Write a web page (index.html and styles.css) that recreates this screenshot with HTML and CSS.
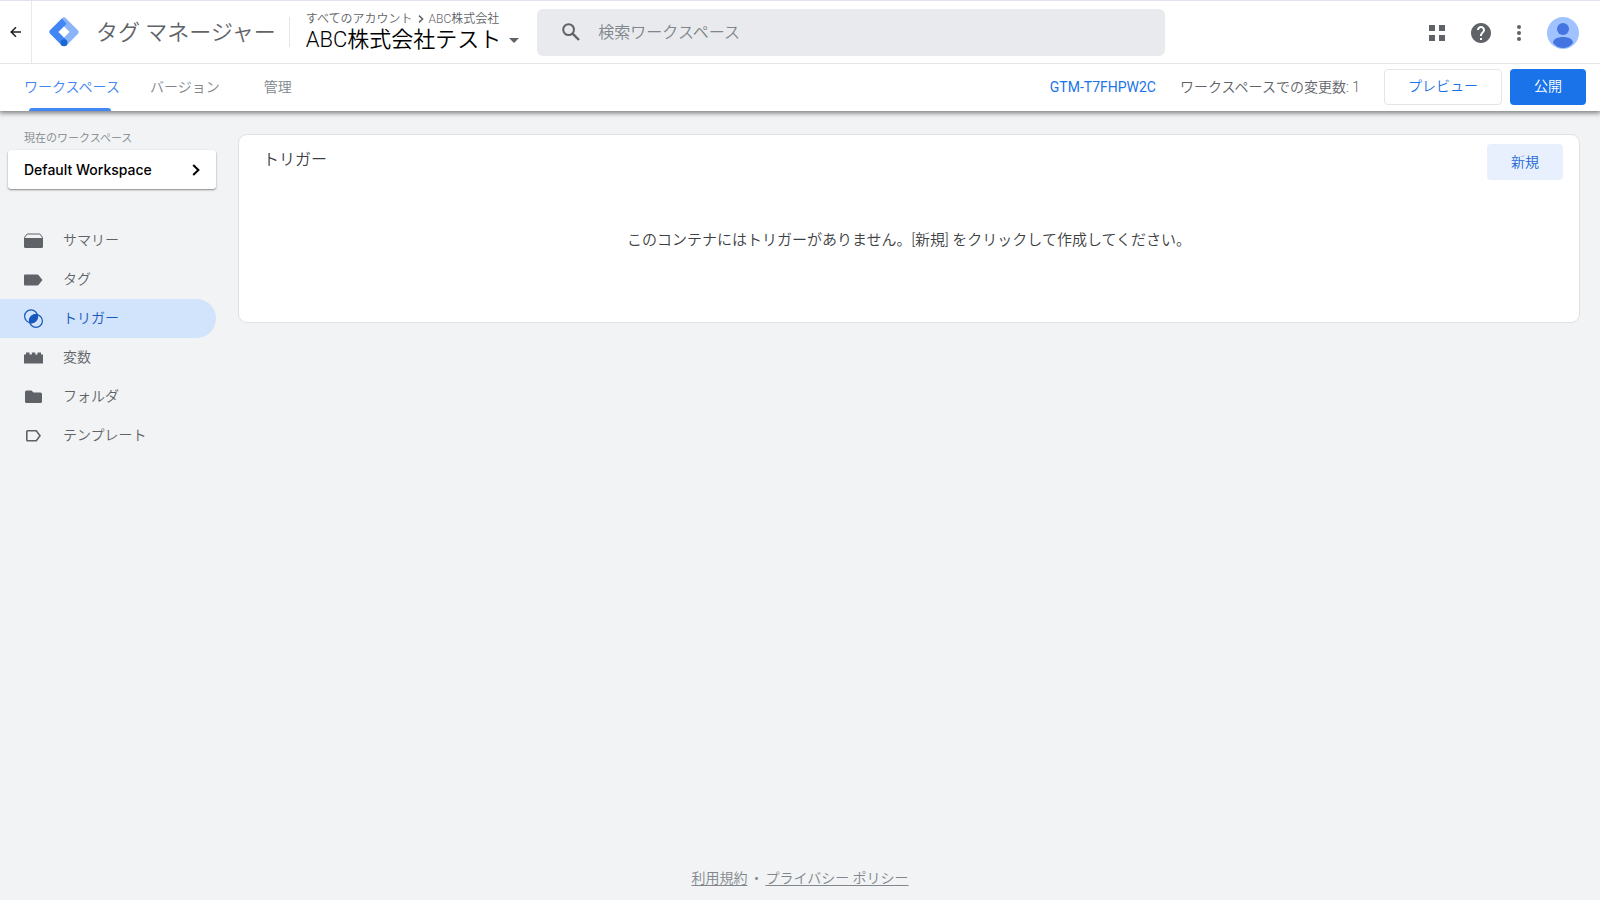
FILE: index.html
```html
<!DOCTYPE html>
<html lang="ja">
<head>
<meta charset="utf-8">
<meta name="viewport" content="width=device-width, initial-scale=1">
<title>タグ マネージャー</title>
<link rel="stylesheet" href="styles.css">
</head>
<body>
<header class="header">
  <div class="topbar">
    <button class="back" type="button" aria-label="戻る">
      <svg width="12" height="12" viewBox="0 0 12 12" fill="none" stroke="currentColor" stroke-width="1.5"><path d="M11 6H1.5M6 1.2L1.2 6 6 10.8"/></svg>
    </button>
    <a class="brand" href="#">
      <svg width="30" height="30" viewBox="0 0 30 30">
        <path d="M12.8 1.400a3 3 0 0 1 4.300 0l11.500 11.500a3 3 0 0 1 0 4.300L17.400 28.400l-5-5.200L20.600 15l-8-8z" fill="#8ab4f8"/>
        <path d="M12.800 1.400L1.400 12.800a3 3 0 0 0 0 4.300l11.400 11.500 4.800-5.400L9.400 15l8.200-8.200z" fill="#4285f4"/>
        <circle cx="15" cy="25.800" r="3.500" fill="#1967d2"/>
      </svg>
      <span class="brand-name">タグ マネージャー</span>
    </a>
    <div class="account">
      <div class="crumbs"><a href="#">すべてのアカウント</a><svg width="6" height="8" viewBox="0 0 6 8" fill="none" stroke="currentColor" stroke-width="1.5"><path d="M1 .6L4.6 4 1 7.4"/></svg><a href="#">ABC株式会社</a></div>
      <button class="container-name" type="button">ABC株式会社テスト<svg width="10" height="5" viewBox="0 0 10 5"><path d="M0 0h10L5 5z" fill="#5f6368"/></svg></button>
    </div>
    <label class="search">
      <svg width="18" height="18" viewBox="0 0 18 18" fill="none" stroke="#5f6368" stroke-width="2"><circle cx="6.6" cy="6.6" r="5.4"/><path d="M10.6 10.6l6.4 6.4" stroke-width="2.4"/></svg>
      <input type="search" placeholder="検索ワークスペース" aria-label="検索ワークスペース">
    </label>
    <div class="tools">
      <button type="button" aria-label="アプリ"><svg width="16" height="16" viewBox="0 0 16 16" fill="currentColor"><path d="M0 0h6v6H0zM10 0h6v6h-6zM0 10h6v6H0zM10 10h6v6h-6z"/></svg></button>
      <button type="button" aria-label="ヘルプ"><svg width="20" height="20" viewBox="2 2 20 20" fill="currentColor"><path d="M12 2C6.48 2 2 6.48 2 12s4.48 10 10 10 10-4.48 10-10S17.52 2 12 2zm1 17h-2v-2h2v2zm2.07-7.75l-.9.92C13.45 12.9 13 13.5 13 15h-2v-.5c0-1.1.45-2.1 1.17-2.83l1.24-1.26c.37-.36.59-.86.59-1.41 0-1.1-.9-2-2-2s-2 .9-2 2H8c0-2.21 1.79-4 4-4s4 1.79 4 4c0 .88-.36 1.68-.93 2.25z"/></svg></button>
      <button type="button" aria-label="メニュー"><svg width="4" height="16" viewBox="0 0 4 16" fill="currentColor"><circle cx="2" cy="2" r="2"/><circle cx="2" cy="8" r="2"/><circle cx="2" cy="14" r="2"/></svg></button>
      <button type="button" aria-label="アカウント"><svg width="32" height="32" viewBox="0 0 32 32"><circle cx="16" cy="16" r="16" fill="#a0c3ff"/><circle cx="16" cy="12" r="6" fill="#4374e0"/><path d="M6 26c0-4 4.500-6 10-6s10 2 10 6c-2.500 3-6 5-10 5s-7.500-2-10-5z" fill="#4374e0"/></svg></button>
    </div>
  </div>
  <div class="tabbar">
    <nav class="tabs">
      <a class="tab tab-active" href="#">ワークスペース</a>
      <a class="tab" href="#">バージョン</a>
      <a class="tab" href="#">管理</a>
    </nav>
    <div class="actions">
      <a class="gtm-id" href="#">GTM-T7FHPW2C</a>
      <span class="changes">ワークスペースでの変更数: 1</span>
      <div class="buttons">
        <button class="btn btn-outline" type="button">プレビュー</button>
        <button class="btn btn-primary" type="button">公開</button>
      </div>
    </div>
  </div>
</header>
<div class="body">
  <aside class="sidebar">
    <div class="ws-label">現在のワークスペース</div>
    <button class="ws" type="button">Default Workspace<svg width="8" height="12" viewBox="0 0 8 12" fill="none" stroke="currentColor" stroke-width="2"><path d="M1.200 1L6.400 6l-5.200 5"/></svg></button>
    <nav class="nav">
      <a href="#"><svg width="19" height="19" viewBox="0 0 19 19"><path d="M.7 8V6.200L3.200 3h12.600l2.500 3.200V8" fill="none" stroke="currentColor"/><path d="M0 7h19v8.500a1.500 1.500 0 0 1-1.500 1.500h-16A1.500 1.500 0 0 1 0 15.500z" fill="currentColor"/></svg><span>サマリー</span></a>
      <a href="#"><svg width="19" height="19" viewBox="0 0 19 19"><path d="M1 4.500h13L18.500 10 14 15.500H1a1 1 0 0 1-1-1v-9a1 1 0 0 1 1-1z" fill="currentColor"/></svg><span>タグ</span></a>
      <a class="nav-active" href="#"><svg width="19" height="19" viewBox="0 0 19 19"><g fill="none" stroke="currentColor" stroke-width="1.200"><circle cx="7" cy="7.300" r="6.400"/><circle cx="12" cy="12" r="6.400"/></g><path d="M13.300 5.700A6.400 6.400 0 0 0 5.700 13.600 6.400 6.400 0 0 0 13.300 5.700z" fill="currentColor" stroke="currentColor" stroke-width="1.200"/></svg><span>トリガー</span></a>
      <a href="#"><svg width="19" height="19" viewBox="0 0 19 19"><path d="M0 6.500h2V4.500h3.500v2H7.800V4.500h3.500v2h2.200V4.500H17v2h2v9H0z" fill="currentColor"/></svg><span>変数</span></a>
      <a href="#"><svg width="19" height="19" viewBox="0 0 19 19"><path d="M2.500 3.500h5l2 2h7A1.500 1.500 0 0 1 18 7v7.500a1.500 1.500 0 0 1-1.500 1.500h-14A1.500 1.500 0 0 1 1 14.500V5a1.500 1.500 0 0 1 1.500-1.500z" fill="currentColor"/></svg><span>フォルダ</span></a>
      <a href="#"><svg width="19" height="19" viewBox="0 0 19 19"><path d="M3.500 4.800h8.800L16 9.800l-3.700 5H3.500a.7.700 0 0 1-.7-.7v-8.600a.7.700 0 0 1 .7-.7z" fill="none" stroke="currentColor" stroke-width="1.600"/></svg><span>テンプレート</span></a>
    </nav>
  </aside>
  <main class="main">
    <section class="card">
      <div class="card-head">
        <h1>トリガー</h1>
        <button class="btn btn-tonal" type="button">新規</button>
      </div>
      <p class="empty">このコンテナにはトリガーがありません。[新規] をクリックして作成してください。</p>
    </section>
  </main>
</div>
<footer class="footer"><a href="#">利用規約</a><span>・</span><a href="#">プライバシー ポリシー</a></footer>
</body>
</html>
```

FILE: styles.css
```css
* { box-sizing: border-box; }

body {
  margin: 0;
  min-height: 100vh;
  display: flex;
  flex-direction: column;
  background: #f1f3f4;
  color: #3c4043;
  font: 350 14px/20px Roboto, "Noto Sans CJK JP", sans-serif;
}

a { color: inherit; text-decoration: none; }
button { margin: 0; padding: 0; border: 0; background: none; font: inherit; color: inherit; cursor: pointer; }
svg { display: block; flex: none; }

.header {
  position: relative;
  background: #fff;
  border-top: 1px solid #e6e0ee;
  box-shadow: 0 1px 5px 1px rgba(0, 0, 0, .5);
}

.topbar {
  display: flex;
  align-items: center;
  height: 63px;
  padding-right: 21px;
  border-bottom: 1px solid #e4e5e7;
}

.back {
  display: flex;
  align-items: center;
  justify-content: center;
  align-self: stretch;
  width: 32px;
  border-right: 1px solid #e8eaed;
  color: #202124;
}

.brand { display: flex; align-items: center; gap: 17px; padding-left: 17px; }
.brand-name { padding-top: 2px; font-size: 22px; line-height: 30px; color: #5f6368; }

.account {
  margin-left: 13px;
  padding-left: 16px;
  border-left: 1px solid #e4e5e7;
  height: 30px;
  display: flex;
  flex-direction: column;
  justify-content: center;
}
.crumbs { display: flex; align-items: center; gap: 5px; font-size: 12px; line-height: 16px; color: #5f6368; }
.container-name { display: flex; align-items: center; gap: 8px; font-size: 22px; line-height: 26px; color: #000; }

.search {
  flex: 0 1 628px;
  display: flex;
  align-items: center;
  gap: 18px;
  height: 47px;
  margin-left: 18px;
  padding: 0 25px;
  border-radius: 6px;
  background: #e8eaed;
}
.search input {
  flex: 1;
  min-width: 0;
  padding: 1px 0 0;
  border: 0;
  outline: 0;
  background: none;
  font: inherit;
  font-size: 16px;
  line-height: 24px;
  color: #3c4043;
}
.search input::placeholder { color: #80868b; opacity: 1; }

.tools { display: flex; align-items: center; gap: 26px; margin-left: auto; padding-top: 1px; color: #5f6368; }

.tabbar { display: flex; justify-content: space-between; height: 47px; padding: 0 14px 0 24px; }
.tabs { display: flex; gap: 30px; color: #80868b; }
.tab { display: flex; align-items: center; position: relative; padding-bottom: 2px; }
.tab:last-child { margin-left: 14px; }
.tab-active { color: #4285f4; }
.tab-active::after {
  content: "";
  position: absolute;
  left: 5px;
  right: 9px;
  bottom: 0;
  height: 3px;
  border-radius: 3px 3px 0 0;
  background: #4285f4;
}

.actions { display: flex; align-items: center; gap: 24px; padding-bottom: 2px; }
.gtm-id { color: #1a73e8; font-weight: 400; }
.changes { color: #5f6368; }
.buttons { display: flex; gap: 8px; }
.btn { height: 36px; padding: 0 24px 1px; border-radius: 4px; }
.btn-outline { padding: 0 23px 1px; border: 1px solid #e4e5e7; color: #1a73e8; }
.btn-primary { background: #1a73e8; color: #fff; }
.btn-tonal { background: #e8f0fe; color: #1967d2; }

.body { flex: 1; display: flex; }

.sidebar { flex: none; width: 216px; padding-top: 19px; }
.ws-label { padding-left: 24px; font-size: 11px; line-height: 18px; color: #80868b; }
.ws {
  display: flex;
  align-items: center;
  justify-content: space-between;
  width: 208px;
  height: 39px;
  margin: 2px 0 32px 8px;
  padding: 0 16px;
  border-radius: 3px;
  background: #fff;
  box-shadow: 0 1px 2px rgba(0, 0, 0, .45);
  font: 500 14px/20px Inter, sans-serif;
  color: #000;
}
.nav a {
  display: flex;
  align-items: center;
  gap: 20px;
  height: 39px;
  padding-left: 24px;
  color: #5f6368;
}
.nav span { padding-bottom: 2px; }
.nav .nav-active { border-radius: 0 20px 20px 0; background: #d2e3fc; color: #185abc; }

.main { flex: 1; padding: 23px 20px 12px 22px; }
.card { min-height: 189px; border: 1px solid #dfe1e5; border-radius: 9px; background: #fff; }
.card-head { display: flex; justify-content: space-between; padding: 9px 16px 0 24px; }
.card h1 { margin: 4px 0 0; font-size: 16px; line-height: 24px; font-weight: inherit; }
.empty { margin: 48px 0 0; text-align: center; font-size: 15px; line-height: 24px; }

.footer { display: flex; justify-content: center; gap: 2px; padding-bottom: 12px; color: #80868b; }
.footer a { text-decoration: underline; text-underline-offset: 2px; }
```
